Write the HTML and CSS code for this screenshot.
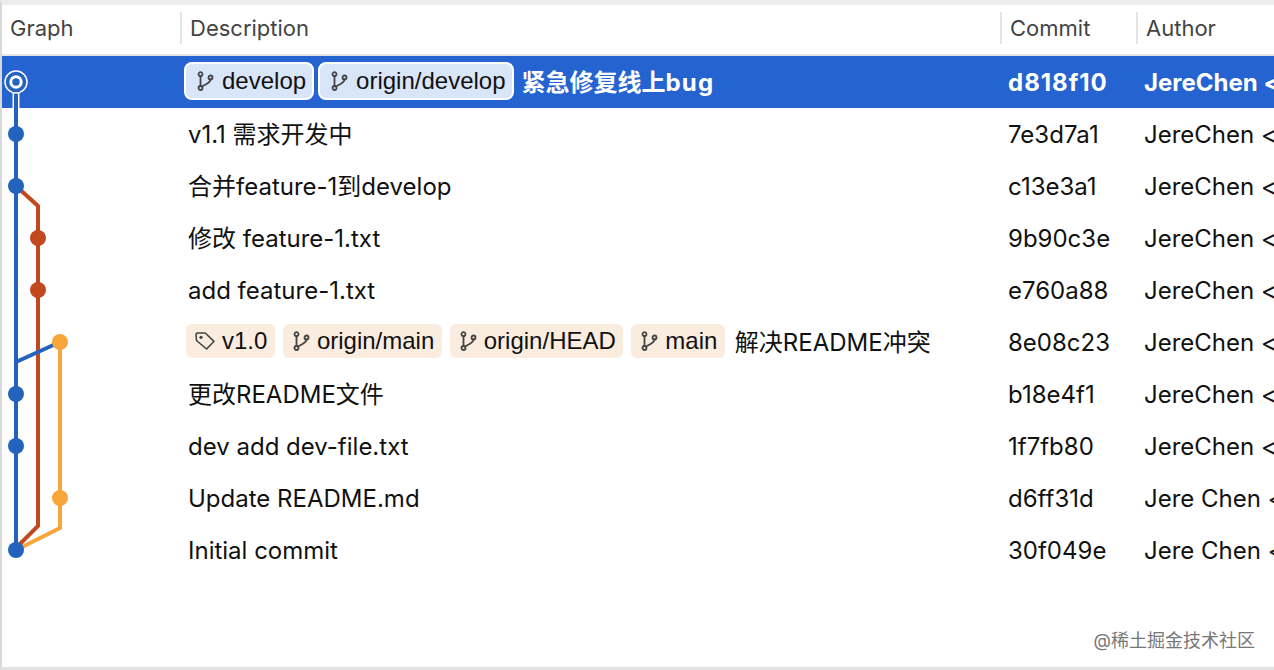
FILE: index.html
```html
<!DOCTYPE html>
<html lang="zh">
<head>
<meta charset="utf-8">
<title>Git Graph</title>
<link rel="stylesheet" href="styles.css">
</head>
<body>
<svg width="0" height="0" class="defs">
  <symbol id="branch" viewBox="0 0 18 20">
    <g fill="none" stroke="currentColor" stroke-width="1.8" stroke-linecap="round">
      <circle cx="4.5" cy="3.2" r="2"/>
      <circle cx="4.5" cy="17" r="2"/>
      <circle cx="14.5" cy="6.5" r="2"/>
      <path d="M4.5 5.2V15M14.5 8.5C14.5 12 10 13 6 15.5"/>
    </g>
  </symbol>
  <symbol id="tag" viewBox="0 0 22 20">
    <g fill="none" stroke="currentColor" stroke-width="1.6" stroke-linejoin="round">
      <path d="M2 3.2 3 2h8.2L20 10.3 12.6 18 2.5 9.5z"/>
    </g>
    <circle cx="7" cy="6.3" r="1.6" fill="currentColor"/>
  </symbol>
</svg>
<main class="window">
  <header class="head">
    <div class="hcell graph">Graph</div>
    <div class="hcell desc">Description</div>
    <div class="hcell commit">Commit</div>
    <div class="hcell author">Author</div>
  </header>
  <section class="rows">
    <svg class="lines" width="80" height="520" viewBox="0 0 80 520">
      <path d="M10.5 30H17.5V52H10.5z" fill="#fff"/>
      <g fill="none" stroke-width="4">
        <path stroke="#c0491e" d="M14 130 36 150V470L14 492"/>
        <path stroke="#f8a63a" d="M58 286V472L14 494"/>
        <path stroke="#2363bd" d="M14 26V494M14 306 58 286"/>
      </g>
      <g fill="#2363bd">
        <circle cx="14" cy="78" r="8"/><circle cx="14" cy="130" r="8"/>
        <circle cx="14" cy="338" r="8"/><circle cx="14" cy="390" r="8"/><circle cx="14" cy="494" r="8"/>
      </g>
      <circle cx="36" cy="182" r="8" fill="#c0491e"/><circle cx="36" cy="234" r="8" fill="#c0491e"/>
      <circle cx="58" cy="286" r="8" fill="#f8a63a"/><circle cx="58" cy="442" r="8" fill="#f8a63a"/>
      <circle cx="14" cy="26" r="11" fill="#2363bd" stroke="#fff" stroke-width="1.5"/>
      <circle cx="14" cy="26" r="5.2" fill="#2363bd" stroke="#fff" stroke-width="3"/>
    </svg>
    <div class="row selected">
      <div class="cell desc">
        <span class="ref light"><svg class="ico"><use href="#branch"/></svg>develop</span>
        <span class="ref light"><svg class="ico"><use href="#branch"/></svg>origin/develop</span>
        <span class="msg">紧急修复线上<span class="latin">bug</span></span>
      </div>
      <div class="cell commit">d818f10</div>
      <div class="cell author">JereChen &lt;</div>
    </div>
    <div class="row"><div class="cell desc">v1.1 需求开发中</div><div class="cell commit">7e3d7a1</div><div class="cell author">JereChen &lt;</div></div>
    <div class="row"><div class="cell desc">合并feature-1到develop</div><div class="cell commit">c13e3a1</div><div class="cell author">JereChen &lt;</div></div>
    <div class="row"><div class="cell desc">修改 feature-1.txt</div><div class="cell commit">9b90c3e</div><div class="cell author">JereChen &lt;</div></div>
    <div class="row"><div class="cell desc">add feature-1.txt</div><div class="cell commit">e760a88</div><div class="cell author">JereChen &lt;</div></div>
    <div class="row">
      <div class="cell desc tags">
        <span class="ref peach"><svg class="ico tagico"><use href="#tag"/></svg>v1.0</span>
        <span class="ref peach"><svg class="ico"><use href="#branch"/></svg>origin/main</span>
        <span class="ref peach"><svg class="ico"><use href="#branch"/></svg>origin/HEAD</span>
        <span class="ref peach"><svg class="ico"><use href="#branch"/></svg>main</span>
        <span class="msg">解决README冲突</span>
      </div>
      <div class="cell commit">8e08c23</div><div class="cell author">JereChen &lt;</div>
    </div>
    <div class="row"><div class="cell desc">更改README文件</div><div class="cell commit">b18e4f1</div><div class="cell author">JereChen &lt;</div></div>
    <div class="row"><div class="cell desc">dev add dev-file.txt</div><div class="cell commit">1f7fb80</div><div class="cell author">JereChen &lt;</div></div>
    <div class="row"><div class="cell desc">Update README.md</div><div class="cell commit">d6ff31d</div><div class="cell author">Jere Chen &lt;</div></div>
    <div class="row"><div class="cell desc">Initial commit</div><div class="cell commit">30f049e</div><div class="cell author">Jere Chen &lt;</div></div>
  </section>
  <div class="mark">@稀土掘金技术社区</div>
</main>
</body>
</html>
```
FILE: styles.css
```css
* { box-sizing: border-box; }
html, body { margin: 0; height: 100%; overflow: hidden; background: #fff; }
body {
  font-family: Inter, "Noto Sans CJK SC", sans-serif;
  font-size: 24px;
  color: #111;
}
.defs { position: absolute; }
.window {
  position: relative;
  height: 670px;
  border-top: 5px solid #ececec;
  border-left: 2px solid #d9d9d9;
  border-bottom: 3px solid #e2e2e2;
  overflow: hidden;
}
.head {
  display: grid;
  grid-template-columns: 178px 820px 136px 1fr;
  height: 51px;
  padding-top: 7px;
  border-bottom: 2px solid #e6e6e6;
  color: #444;
  font-size: 22px;
}
.hcell { height: 32px; line-height: 32px; padding-left: 8px; }
.hcell.desc, .hcell.commit, .hcell.author { border-left: 2px solid #e4e4e4; }
.rows { position: relative; }
.lines { position: absolute; left: 0; top: 0; z-index: 1; }
.row {
  display: grid;
  grid-template-columns: 179px 820px 136px 1fr;
  height: 52px;
  align-items: center;
  white-space: nowrap;
}
.row .desc { grid-column: 2; }
.cell { overflow: hidden; height: 52px; padding-top: 2px; line-height: 50px; }
.cell.desc { padding-left: 7px; }
.cell.commit { padding-left: 7px; }
.cell.author { padding-left: 7px; }
.selected { background: #2563d0; color: #fff; font-weight: 700; }
.selected .cell.desc { display: flex; align-items: center; gap: 4px; padding-left: 3px; }
.selected .cell.commit { letter-spacing: 1px; }
.selected .msg { margin-left: 4px; }
.latin { letter-spacing: 1.2px; }
.tags { display: flex; align-items: center; gap: 8px; padding-left: 5px !important; }
.tags .msg { margin-left: 2px; }
.ref {
  display: inline-flex;
  align-items: center;
  margin-bottom: 4px;
  font-family: "Liberation Sans", sans-serif;
  font-weight: 400;
  color: #111;
  border-radius: 6px;
  line-height: 1;
}
.light {
  height: 38px;
  padding: 0 6px 0 10px;
  background: #d9e5f9;
  border: 2px solid #fff;
  border-radius: 8px;
}
.peach {
  height: 34px;
  padding: 0 7.5px 0 9px;
  background: #faecdf;
}
.ico { width: 18px; height: 20px; margin-right: 7px; color: #444; flex: none; }
.light .ico { margin-right: 8px; }
.tagico { width: 22px; margin-right: 6px; margin-left: -1px; }
.mark {
  position: absolute;
  right: 19px;
  bottom: 14px;
  color: #777;
  font-size: 18px;
  line-height: 24px;
}
```
